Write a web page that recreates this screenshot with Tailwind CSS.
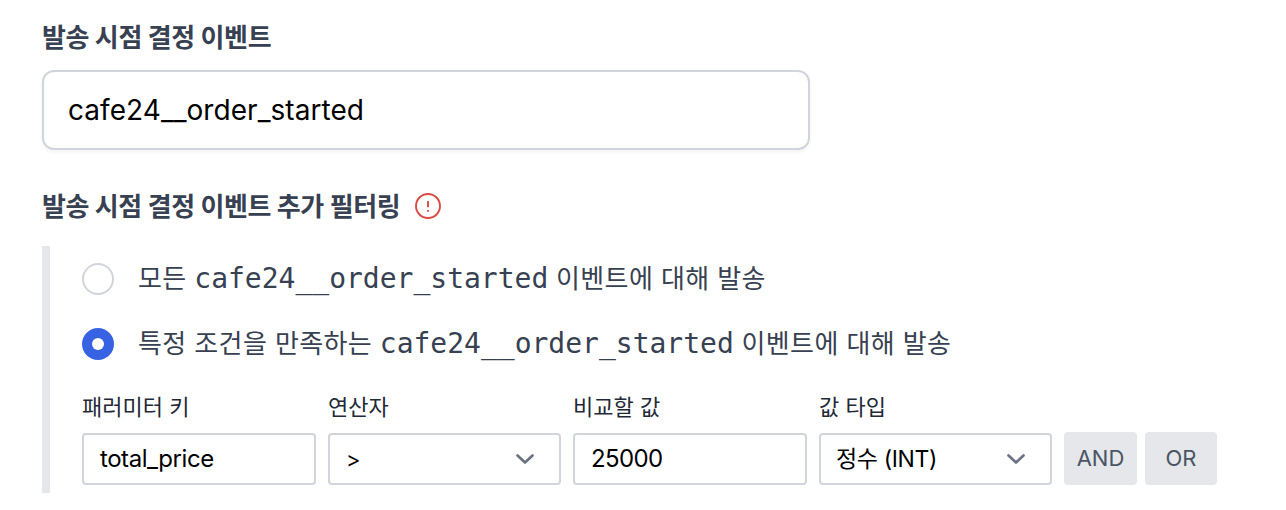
<!DOCTYPE html>
<html lang="ko"><head><meta charset="utf-8"><title>이벤트 필터링</title><script src="https://cdn.jsdelivr.net/npm/@tailwindcss/browser@4"></script></head>
<body class="bg-white font-['Inter','Noto_Sans_CJK_KR',sans-serif] text-[#374151]">
<main class="pt-[18px] pl-[42px]">
<h2 class="h-10 text-[26px] leading-10 font-bold tracking-[-0.38px] whitespace-nowrap">발송 시점 결정 이벤트</h2>
<div class="mt-3 flex h-20 w-[768px] items-center rounded-xl border-2 border-[#d1d5db] px-6 text-[28px] tracking-[0.05px] text-black shadow-[0_2px_4px_rgba(0,0,0,0.05)]">cafe24__order_started</div>
<div class="mt-9 flex h-10 items-center gap-[15px] text-[26px] font-bold tracking-[-0.39px] whitespace-nowrap"><h2>발송 시점 결정 이벤트 추가 필터링</h2>
<svg class="size-[26px]" viewBox="0 0 26 26" fill="none" stroke="#dc4a43" stroke-width="1.9"><circle cx="13" cy="13" r="12"/><path d="M13 8v6.2M13 17v1.8"/></svg></div>
<section class="mt-5 h-[247px] border-l-8 border-[#e5e7eb] pl-8">
<div class="flex h-[65px] items-center gap-6 text-[26px] tracking-[0.38px] whitespace-nowrap"><i class="size-8 rounded-full border-2 border-[#d1d5db]"></i><p>모든 <span class="font-['DejaVu_Sans_Mono'] text-[28px] tracking-normal">cafe24__order_started</span> 이벤트에 대해 발송</p></div>
<div class="flex h-[65px] items-center gap-6 text-[26px] tracking-[0.38px] whitespace-nowrap"><i class="flex size-8 items-center justify-center rounded-full bg-[#3862e4]"><b class="size-3 rounded-full bg-white"></b></i><p>특정 조건을 만족하는 <span class="font-['DejaVu_Sans_Mono'] text-[28px] tracking-normal">cafe24__order_started</span> 이벤트에 대해 발송</p></div>
<div class="flex items-end pt-[14px] text-[22px] whitespace-nowrap text-[#1f2937]">
<div class="mr-3 w-[234px]"><div class="h-[43px] leading-[34px]">패러미터 키</div><div class="flex h-[52px] items-center rounded border-2 border-[#d1d5db] px-4 text-[24px] tracking-[-0.45px] text-black">total_price</div></div>
<div class="mr-3 w-[233px]"><div class="h-[43px] leading-[34px]">연산자</div><div class="flex h-[52px] items-center justify-between rounded border-2 border-[#d1d5db] pr-6 pl-4 text-[22px] text-black"><span>&gt;</span><svg class="size-5" viewBox="0 0 20 20" fill="none" stroke="#6b7280" stroke-width="2.7" stroke-linecap="round" stroke-linejoin="round"><path d="m2.5 6.5 7.5 7 7.5-7"/></svg></div></div>
<div class="mr-3 w-[234px]"><div class="h-[43px] leading-[34px]">비교할 값</div><div class="flex h-[52px] items-center rounded border-2 border-[#d1d5db] px-4 text-[24px] tracking-[-0.6px] text-black">25000</div></div>
<div class="mr-3 w-[233px]"><div class="h-[43px] leading-[34px]">값 타입</div><div class="flex h-[52px] items-center justify-between rounded border-2 border-[#d1d5db] pr-6 pl-[15px] text-[23px] tracking-[-0.35px] text-black"><span>정수 (INT)</span><svg class="size-5" viewBox="0 0 20 20" fill="none" stroke="#6b7280" stroke-width="2.7" stroke-linecap="round" stroke-linejoin="round"><path d="m2.5 6.5 7.5 7 7.5-7"/></svg></div></div>
<button class="mr-2 h-[53px] w-[73px] rounded bg-[#e5e7eb] text-[22px] text-[#4b5563]">AND</button>
<button class="h-[53px] w-[72px] rounded bg-[#e5e7eb] text-[22px] text-[#4b5563]">OR</button>
</div>
</section></main></body></html>
